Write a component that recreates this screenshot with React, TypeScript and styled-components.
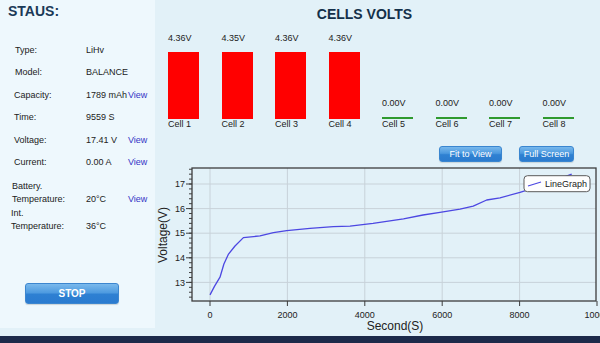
import React from "react";
import styled, { createGlobalStyle } from "styled-components";

const GlobalStyle = createGlobalStyle`
  html, body {
    margin: 0;
    padding: 0;
  }
  body {
    font-family: "Liberation Sans", Arial, sans-serif;
    background: #e2f1f8;
    overflow: hidden;
  }
`;

interface TInfoRow {
  label: string[];
  value: string;
  view?: boolean;
  indent: number;
  gapTop?: number;
}

const infoRows: TInfoRow[] = [
  { label: ["Type:"], value: "LiHv", indent: 15 },
  { label: ["Model:"], value: "BALANCE", indent: 15 },
  { label: ["Capacity:"], value: "1789 mAh", view: true, indent: 14 },
  { label: ["Time:"], value: "9559 S", indent: 14 },
  { label: ["Voltage:"], value: "17.41 V", view: true, indent: 14 },
  { label: ["Current:"], value: "0.00 A", view: true, indent: 14 },
  { label: ["Battery.", "Temperature:"], value: "20°C", view: true, indent: 12, gapTop: 7 },
  { label: ["Int.", "Temperature:"], value: "36°C", indent: 11, gapTop: 2 },
];

const cells = [4.36, 4.35, 4.36, 4.36, 0, 0, 0, 0];

// voltage curve, [seconds, volts]
const curve: [number, number][] = [
  [0, 12.49], [120, 12.85], [258, 13.21], [360, 13.75], [474, 14.14], [646, 14.48],
  [862, 14.82], [1292, 14.89], [1637, 15.02], [1981, 15.1], [2584, 15.2], [3187, 15.27],
  [3618, 15.29], [4212, 15.4], [5000, 15.58], [5504, 15.74], [5943, 15.85], [6460, 15.98],
  [6800, 16.1], [7150, 16.35], [7494, 16.44], [8010, 16.66], [8600, 16.95], [9346, 17.4],
];

const PLOT = { left: 37, right: 441, top: 4, bottom: 137 };
const xs = (v: number) => 55 + v * 0.0387;
const ys = (v: number) => 20 + (17 - v) * 24.6;

const Chart = () => {
  const minor: number[] = [];
  for (let v = 12.4; v < 17.65; v += 0.2) minor.push(Math.round(v * 10) / 10);
  const yMajor = [13, 14, 15, 16, 17];
  const xMajor = [0, 2000, 4000, 6000, 8000, 10000];
  const path = curve.map(([s, v], i) => `${i ? "L" : "M"}${xs(s).toFixed(1)} ${ys(v).toFixed(1)}`).join(" ");

  return (
    <ChartSvg viewBox="0 0 445 172" width={445} height={172}>
      {xMajor.slice(0, 5).map((s) => (
        <line key={s} x1={xs(s)} x2={xs(s)} y1={PLOT.top} y2={PLOT.bottom} stroke="#c8d2d9" strokeWidth={1} />
      ))}
      {yMajor.map((v) => (
        <line key={v} x1={PLOT.left} x2={PLOT.right} y1={ys(v)} y2={ys(v)} stroke="#c8d2d9" strokeWidth={1} />
      ))}
      <rect
        x={PLOT.left}
        y={PLOT.top}
        width={PLOT.right - PLOT.left}
        height={PLOT.bottom - PLOT.top}
        fill="none"
        stroke="#3d3d3d"
        strokeWidth={1.3}
      />
      {minor.map((v) => (
        <line key={v} x1={PLOT.left - 3} x2={PLOT.left} y1={ys(v)} y2={ys(v)} stroke="#3d3d3d" strokeWidth={1} />
      ))}
      {yMajor.map((v) => (
        <g key={v}>
          <line x1={PLOT.left - 6} x2={PLOT.left} y1={ys(v)} y2={ys(v)} stroke="#3d3d3d" strokeWidth={1} />
          <TickText x={30} y={ys(v) + 3.2} textAnchor="end">
            {v}
          </TickText>
        </g>
      ))}
      {xMajor.map((s) => (
        <g key={s}>
          <line x1={xs(s)} x2={xs(s)} y1={PLOT.bottom} y2={PLOT.bottom + 5} stroke="#3d3d3d" strokeWidth={1} />
          <TickText x={xs(s)} y={153.5} textAnchor="middle">
            {s}
          </TickText>
        </g>
      ))}
      <path d={path} fill="none" stroke="#4c47e2" strokeWidth={1.3} strokeLinejoin="round" />
      <AxisTitle x={240} y={166} textAnchor="middle">
        Second(S)
      </AxisTitle>
      <AxisTitle transform="translate(11.5 71) rotate(-90)" textAnchor="middle">
        Voltage(V)
      </AxisTitle>
      <rect x={369} y={11.7} width={66} height={16} rx={3.5} fill="#fefefe" stroke="#5a5a5a" strokeWidth={1} />
      <line x1={373} y1={22} x2={386} y2={18} stroke="#4c47e2" strokeWidth={1.3} />
      <TickText x={390} y={23.3}>
        LineGraph
      </TickText>
    </ChartSvg>
  );
};

const App = () => {
  return (
    <>
      <GlobalStyle />
      <Page>
        <Body>
          <Sidebar>
            <SideTitle>STAUS:</SideTitle>
            <InfoList>
              {infoRows.map((row) => (
                <InfoRow key={row.label.join(" ")} $tall={row.label.length > 1} $gapTop={row.gapTop || 0}>
                  <InfoLabel $indent={row.indent}>
                    {row.label.map((l) => (
                      <div key={l}>{l}</div>
                    ))}
                  </InfoLabel>
                  <InfoValue>{row.value}</InfoValue>
                  {row.view && <ViewLink>View</ViewLink>}
                </InfoRow>
              ))}
            </InfoList>
            <StopButton>STOP</StopButton>
          </Sidebar>
          <Main>
            <MainTitle>CELLS VOLTS</MainTitle>
            <CellsRow>
              {cells.map((v, i) => (
                <Cell key={i}>
                  <CellValue>{v.toFixed(2)}V</CellValue>
                  <CellBar $h={v > 0 ? v * 15.37 : 2} $empty={v === 0} />
                  <CellName>Cell {i + 1}</CellName>
                </Cell>
              ))}
            </CellsRow>
            <ButtonRow>
              <ActionButton $w={63}>Fit to View</ActionButton>
              <ActionButton $w={55}>Full Screen</ActionButton>
            </ButtonRow>
            <Chart />
          </Main>
        </Body>
        <Footer />
      </Page>
    </>
  );
};

const Page = styled.div`
  width: 600px;
  height: 343px;
  display: flex;
  flex-direction: column;
  background: #e2f1f8;
`;

const Body = styled.div`
  flex: 1;
  display: flex;
  min-height: 0;
`;

const Sidebar = styled.aside`
  width: 155px;
  margin-bottom: 8px;
  background: #eef8fd;
  display: flex;
  flex-direction: column;
`;

const SideTitle = styled.h2`
  margin: 0;
  padding: 3px 0 0 8px;
  font-size: 14px;
  line-height: 16px;
  font-weight: bold;
  color: #1b3957;
`;

const InfoList = styled.div`
  margin-top: 20px;
  display: flex;
  flex-direction: column;
`;

const InfoRow = styled.div<{ $tall: boolean; $gapTop: number }>`
  display: flex;
  align-items: ${(p) => (p.$tall ? "flex-end" : "center")};
  height: ${(p) => (p.$tall ? "auto" : "22.4px")};
  margin-top: ${(p) => p.$gapTop}px;
  font-size: 9px;
  line-height: 12.5px;
  color: #222;
`;

const InfoLabel = styled.div<{ $indent: number }>`
  width: 86px;
  box-sizing: border-box;
  padding-left: ${(p) => p.$indent}px;
`;

const InfoValue = styled.span`
  width: 42px;
  white-space: nowrap;
`;

const ViewLink = styled.span`
  color: #3535c6;
  cursor: pointer;
`;

const StopButton = styled.button`
  margin: auto 0 24px 25px;
  width: 94px;
  height: 21px;
  padding: 0;
  border: 1px solid #3c86cf;
  border-radius: 3px;
  background: linear-gradient(to bottom, #7ab9ec 0%, #4f9be0 45%, #2e80d2 55%, #2a7bd0 100%);
  color: #fff;
  font-family: "Liberation Sans", Arial, sans-serif;
  font-size: 10px;
  font-weight: bold;
  box-shadow: 0 1px 1px rgba(0, 0, 0, 0.15);
`;

const Main = styled.main`
  flex: 1;
  display: flex;
  flex-direction: column;
  padding-top: 5px;
  min-width: 0;
`;

const MainTitle = styled.h1`
  margin: 0;
  padding-right: 26px;
  text-align: center;
  font-size: 14px;
  line-height: 18px;
  font-weight: bold;
  color: #13304a;
`;

const CellsRow = styled.div`
  height: 107px;
  display: flex;
  align-items: flex-end;
  gap: 22.5px;
  padding-left: 13px;
`;

const Cell = styled.div`
  width: 31px;
  display: flex;
  flex-direction: column;
  font-size: 9px;
  line-height: 11px;
  color: #222;
`;

const CellValue = styled.span`
  margin-bottom: 8px;
  white-space: nowrap;
`;

const CellBar = styled.div<{ $h: number; $empty: boolean }>`
  height: ${(p) => p.$h}px;
  background: ${(p) => (p.$empty ? "#2f9a2f" : "#ff0000")};
`;

const CellName = styled.span`
  white-space: nowrap;
`;

const ButtonRow = styled.div`
  margin-top: 16px;
  height: 16px;
  display: flex;
  justify-content: flex-end;
  gap: 17px;
  padding-right: 26px;
`;

const ActionButton = styled.button<{ $w: number }>`
  width: ${(p) => p.$w}px;
  height: 16px;
  padding: 0;
  border: 1px solid #3a86d0;
  border-radius: 3px;
  background: linear-gradient(to bottom, #78b8ec 0%, #4c99df 45%, #2f81d2 55%, #2b7bce 100%);
  color: #fff;
  font-family: "Liberation Sans", Arial, sans-serif;
  font-size: 9px;
  box-shadow: 0 1px 1px rgba(0, 0, 0, 0.12);
`;

const ChartSvg = styled.svg`
  display: block;
  margin-top: 2px;
  overflow: hidden;
`;

const TickText = styled.text`
  font-family: "Liberation Sans", Arial, sans-serif;
  font-size: 9px;
  fill: #222;
`;

const AxisTitle = styled.text`
  font-family: "Liberation Sans", Arial, sans-serif;
  font-size: 12px;
  fill: #222;
`;

const Footer = styled.div`
  height: 7px;
  background: #1c2a4a;
`;

export default App;
